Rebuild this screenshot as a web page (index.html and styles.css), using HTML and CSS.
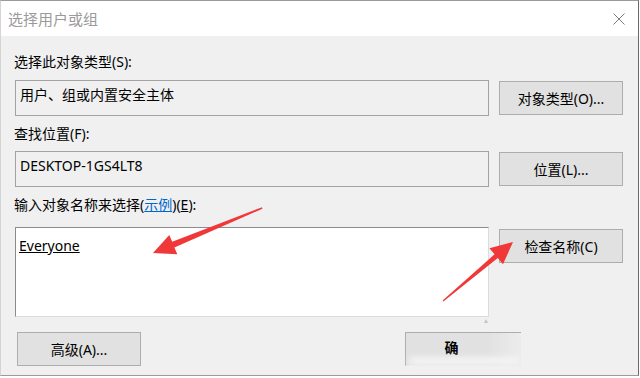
FILE: index.html
```html
<!DOCTYPE html>
<html lang="zh-CN">

<head>
    <meta charset="UTF-8">
    <meta name="viewport" content="width=device-width, initial-scale=1.0">
    <title>选择用户或组</title>
    <link rel="stylesheet" href="styles.css">
</head>

<body>
    <section class="window">
        <div class="titlebar">
            <span class="title">选择用户或组</span>
            <svg class="close" width="12" height="12" viewBox="0 0 12 12">
                <path d="M0.5 0.5 L11.5 11.5 M11.5 0.5 L0.5 11.5" stroke="#7a7a7a" stroke-width="1" fill="none" />
            </svg>
        </div>

        <div class="content">
            <p class="label label-first">选择此对象类型(S):</p>
            <div class="row">
                <div class="box readonly">用户、组或内置安全主体</div>
                <button class="btn">对象类型(O)...</button>
            </div>

            <p class="label label-second">查找位置(F):</p>
            <div class="row row-second">
                <div class="box readonly">DESKTOP-1GS4LT8</div>
                <button class="btn">位置(L)...</button>
            </div>

            <p class="label label-third">输入对象名称来选择(<a href="#">示例</a>)(<u>E</u>):</p>
            <div class="row row-third">
                <div class="names">
                    <div class="box entry"><u>Everyone</u></div>
                    <span class="grip"></span>
                </div>
                <button class="btn btn-check">检查名称(C)</button>
            </div>

            <div class="footer">
                <button class="btn">高级(A)...</button>
                <button class="btn btn-ok">确</button>
            </div>
        </div>

        <!-- red arrows drawn over the dialog -->
        <svg class="arrows" width="640" height="378" viewBox="0 0 640 378">
            <polygon fill="#f03838"
                points="262,207.3 262.4,208.7 174.4,247.4 177.3,254.3 153,253 169.3,234.9 172.2,241.8" />
            <polygon fill="#f03838"
                points="442.6,300.6 443.4,301.4 497.8,258.1 503,264.2 513,242 489.4,248.2 494.6,254.3" />
        </svg>
        <div class="smudge"></div>
    </section>
</body>

</html>
```

FILE: styles.css
```css
body {
    margin: 0;
    background-color: #ffffff;
    font-family: "Noto Sans", "Noto Sans CJK SC", sans-serif;
    font-size: 14px;
    color: #000000;
}

.window {
    position: relative;
    width: 639px;
    height: 376px;
    background-color: #f0f0f0;
    border-top: 1px solid #9a9a9a;
    border-left: 1px solid #d4d4d4;
    border-right: 1px solid #6a6a6a;
    border-bottom: 1px solid #9a9a9a;
    box-sizing: border-box;
    overflow: hidden;
}

.titlebar {
    display: flex;
    align-items: center;
    justify-content: space-between;
    height: 35px;
    padding: 0 13px 0 7px;
    background-color: #ffffff;
}

.title {
    font-size: 15px;
    color: #9a9a9a;
}

.close {
    margin-top: 1px;
}

.content {
    display: flex;
    flex-direction: column;
    padding: 0 15px 0 13px;
}

.label {
    margin: 0;
    height: 20px;
    line-height: 20px;
}

.label a {
    color: #0066cc;
}

.label-first {
    margin-top: 16px;
}

.label-second {
    margin-top: 8px;
}

.label-third {
    margin-top: 8px;
}

.row {
    display: flex;
    align-items: flex-start;
    gap: 10px;
    margin-top: 8px;
}

.row-second {
    margin-top: 7px;
}

.row-third {
    margin-top: 12px;
}

.box {
    box-sizing: border-box;
    width: 474px;
    margin-left: 1px;
    padding: 4px 4px 0 4px;
    line-height: 20px;
    border: 1px solid #a2a2a2;
}

.readonly {
    height: 36px;
    background-color: #f0f0f0;
}

.names {
    display: flex;
    flex-direction: column;
    align-items: flex-end;
}

.entry {
    height: 90px;
    padding: 8px 3px 0 3px;
    background-color: #ffffff;
    border-color: #8c8c8c #dcdcdc #dcdcdc #8c8c8c;
}

.grip {
    width: 0;
    height: 0;
    margin: 2px 1px 0 0;
    border-left: 2px solid transparent;
    border-right: 2px solid transparent;
    border-bottom: 4px solid #c4c4c4;
}

.btn {
    box-sizing: border-box;
    width: 124px;
    height: 34px;
    margin-top: 1px;
    padding: 0;
    font-family: inherit;
    font-size: 14px;
    color: #000000;
    background-color: #e1e1e1;
    border: 1px solid #adadad;
}

.btn-check {
    margin-top: 2px;
}

.footer {
    display: flex;
    align-items: flex-start;
    margin-top: 8px;
    padding-left: 3px;
}

.btn-ok {
    width: 116px;
    margin-left: 264px;
    padding-right: 24px;
    padding-bottom: 4px;
    font-weight: bold;
    border-right: none;
    border-bottom-color: #e8e8e8;
    background: linear-gradient(to right, #e1e1e1 70%, #ececec);
}

.arrows {
    position: absolute;
    top: -1px;
    left: -1px;
}

/* blurred watermark patch over the OK button */
.smudge {
    position: absolute;
    left: 408px;
    top: 356px;
    width: 110px;
    height: 8px;
    background-color: #f4f4f4;
    filter: blur(3px);
}
```
